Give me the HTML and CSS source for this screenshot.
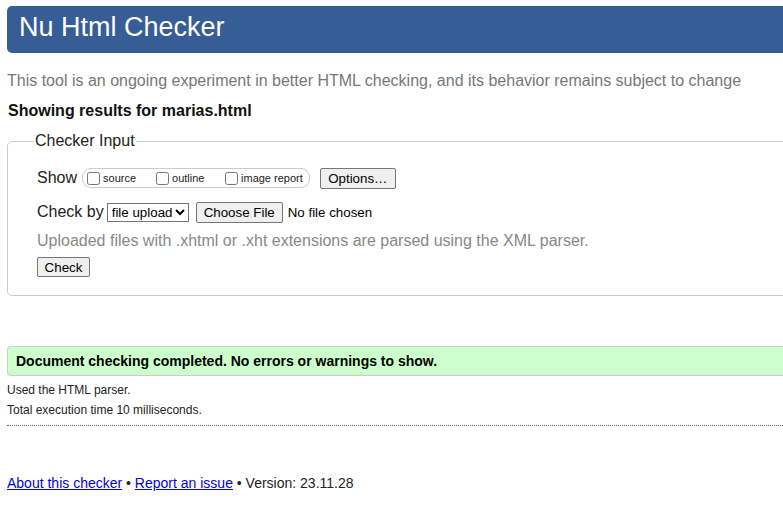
FILE: index.html
```html
<!DOCTYPE html>
<html>
<head>
<meta charset="utf-8">
<title>Nu Html Checker</title>
<link rel="stylesheet" href="styles.css">
</head>
<body>
<div class="page">
  <h1 class="brand">Nu Html Checker</h1>
  <p class="intro">This tool is an ongoing experiment in better HTML checking, and its behavior remains subject to change</p>
  <p class="showing">Showing results for marias.html</p>
  <fieldset class="input">
    <legend class="legend">Checker Input</legend>
    <div class="row show-row">
      <span class="lbl">Show</span>
      <span class="opts">
        <label class="opt opt-source"><input type="checkbox" class="cb">source</label>
        <label class="opt opt-outline"><input type="checkbox" class="cb">outline</label>
        <label class="opt"><input type="checkbox" class="cb">image report</label>
      </span>
      <button class="btn btn-options" type="button">Options…</button>
    </div>
    <div class="row by-row">
      <span class="lbl">Check by</span>
      <select class="sel"><option>file upload</option></select>
      <span class="file"><button class="btn" type="button">Choose File</button><span class="nofile">No file chosen</span></span>
    </div>
    <p class="note">Uploaded files with .xhtml or .xht extensions are parsed using the XML parser.</p>
    <div class="row"><button class="btn btn-check" type="button">Check</button></div>
  </fieldset>
  <p class="success">Document checking completed. No errors or warnings to show.</p>
  <p class="meta">Used the HTML parser.</p>
  <p class="meta">Total execution time 10 milliseconds.</p>
  <hr class="sep">
  <p class="footer"><a href="#">About this checker</a> • <a href="#">Report an issue</a> • Version: 23.11.28</p>
</div>
</body>
</html>
```
FILE: styles.css
```css
html, body {
  margin: 0;
  padding: 0;
  overflow: hidden;
  background: #fff;
}
body {
  font-family: "Liberation Sans", Arial, sans-serif;
  color: #222;
}
.page {
  width: 1100px;
  padding: 6px 0 0 7px;
}
.brand {
  margin: 0;
  background: #365d95;
  color: #fff;
  font-weight: normal;
  font-size: 27px;
  line-height: 43px;
  padding: 0 0 4px 12px;
  border-radius: 5px 0 0 5px;
}
.intro {
  margin: 18px 0 0;
  font-size: 16px;
  line-height: 20px;
  color: #777;
}
.showing {
  margin: 10px 0 0 1px;
  font-size: 16px;
  font-weight: bold;
  line-height: 20px;
  color: #111;
}
.input {
  margin: 11px 0 0;
  border: 1px solid #ccc;
  border-radius: 5px 0 0 5px;
  padding: 10px 0 18px 29px;
  min-width: 0;
}
.legend {
  font-size: 16px;
  line-height: 18px;
  padding: 0 1px;
  margin-left: -3px;
  color: #222;
}
.row {
  display: flex;
  align-items: center;
}
.lbl {
  font-size: 16px;
  line-height: 20px;
}
.show-row {
  margin-top: 7px;
  height: 22px;
}
.opts {
  display: inline-flex;
  align-items: center;
  height: 18px;
  margin-left: 5px;
  padding: 0 6px 0 3px;
  border: 1px solid #ccc;
  border-radius: 9px;
  font-size: 11px;
}
.opt {
  display: inline-flex;
  align-items: flex-end;
  line-height: 13px;
}
.opt-source { width: 69px; }
.opt-outline { width: 69px; }
.cb {
  width: 13px;
  height: 13px;
  margin: 0 3px 0 1px;
}
.btn {
  font-family: "Liberation Sans", Arial, sans-serif;
  font-size: 13.33px;
  color: #000;
  background: #efefef;
  border: 1px solid #767676;
  border-radius: 2px;
  padding: 1px 6px;
  height: 21px;
}
.btn-options {
  margin-left: 10px;
  width: 76px;
}
.by-row {
  margin-top: 12px;
  height: 22px;
}
.sel {
  margin-left: 3px;
  font-family: "Liberation Sans", Arial, sans-serif;
  font-size: 13.33px;
  height: 19px;
  width: 82px;
  border: 1px solid #767676;
  border-radius: 0;
  padding: 0;
  background: #fff;
  color: #000;
}
.file {
  display: inline-flex;
  align-items: center;
  margin-left: 7px;
  font-size: 13.33px;
}
.file .btn { width: 87px; }
.nofile {
  margin-left: 5px;
  color: #000;
}
.note {
  margin: 8px 0 0;
  font-size: 16px;
  line-height: 20px;
  color: #888;
}
.btn-check {
  margin-top: 6px;
  width: 53px;
  height: 20px;
  padding: 0;
}
.success {
  margin: 50px 0 7px;
  background: #ccffcc;
  border: 1px solid #ccc;
  border-right: 0;
  border-radius: 4px 0 0 4px;
  padding: 0 0 0 8px;
  font-size: 14px;
  font-weight: bold;
  line-height: 28px;
  color: #000;
}
.meta {
  margin: 6px 0 0;
  font-size: 12px;
  line-height: 14px;
  color: #222;
}
.sep {
  margin: 8px 0 0;
  border: 0;
  border-top: 1px dotted #666;
  height: 0;
}
.footer {
  margin: 49px 0 0;
  font-size: 14px;
  line-height: 16px;
  color: #222;
}
.footer a {
  color: #0000ee;
  text-decoration: underline;
}
```
